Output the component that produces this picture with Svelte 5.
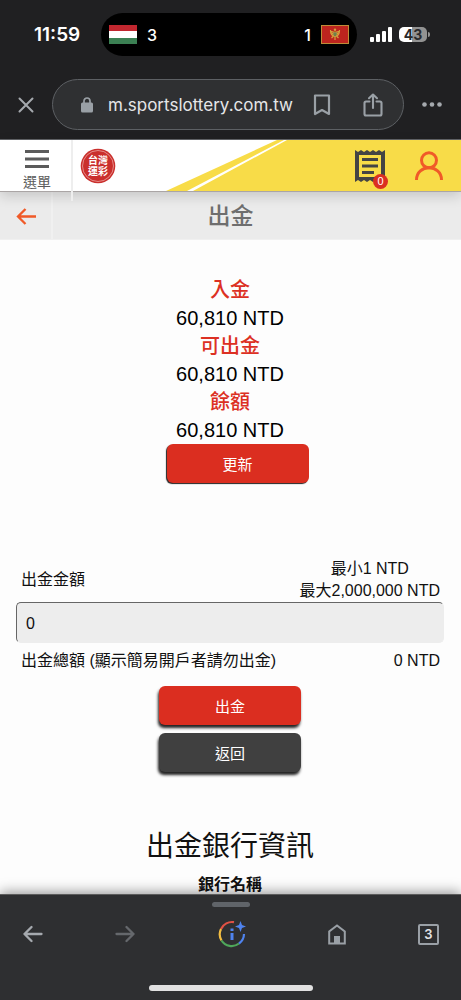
<script>
  const balances = [
    { label: '入金', value: '60,810 NTD' },
    { label: '可出金', value: '60,810 NTD' },
    { label: '餘額', value: '60,810 NTD' }
  ];
  let amount = $state('0');
</script>

<div class="phone">
  <div class="chrome">
    <div class="status">
      <span class="time">11:59</span>
      <div class="island">
        <svg width="28" height="19" viewBox="0 0 28 19" aria-hidden="true">
          <rect width="28" height="19" fill="#fff" />
          <rect width="28" height="6" fill="#c1272f" />
          <rect y="13" width="28" height="6" fill="#3b8053" />
        </svg>
        <span>3</span>
        <span class="away">1</span>
        <svg width="28" height="19" viewBox="0 0 28 19" aria-hidden="true">
          <rect x=".5" y=".5" width="27" height="18" fill="#bd241e" stroke="#bd8c38" />
          <g fill="none" stroke="#d3a13d" stroke-width="1.2">
            <path d="M12.5 7c-2-.2-2.8-1-3-2 0 4 1 6 4 6M15.5 7c2-.2 2.8-1 3-2 0 4-1 6-4 6" />
            <path d="M10 7.5l2 1.5M18 7.5l-2 1.5M12.5 11l-2 2M15.5 11l2 2M14 11v4" />
          </g>
          <circle cx="14" cy="4.8" r="1.2" fill="#d3a13d" />
          <path d="M12 7h4v3l-2 2-2-2z" fill="#71804b" stroke="#d3a13d" stroke-width=".7" />
        </svg>
      </div>
      <svg width="22" height="15" viewBox="0 0 22 15" fill="#fff" aria-hidden="true">
        <rect x="0" y="10" width="4" height="5" rx="1" />
        <rect x="6" y="7" width="4" height="8" rx="1" />
        <rect x="12" y="4" width="4" height="11" rx="1" />
        <rect x="18" y="0" width="4" height="15" rx="1" />
      </svg>
      <div class="battery"><span>43</span></div>
    </div>

    <div class="address">
      <button class="plain close" aria-label="Close">
        <svg width="16" height="16" viewBox="0 0 16 16"><path d="M1.5 1.5l13 13M14.5 1.5l-13 13" stroke="#a5a9ae" stroke-width="2" stroke-linecap="round" /></svg>
      </button>
      <div class="url">
        <svg width="12" height="16" viewBox="0 0 12 16" aria-hidden="true">
          <rect y="5.5" width="12" height="10" rx="1.5" fill="#9aa0a6" />
          <path d="M3 6V4a3 3 0 0 1 6 0v2" fill="none" stroke="#9aa0a6" stroke-width="1.7" />
        </svg>
        <span class="domain">m.sportslottery.com.tw</span>
        <button class="plain" aria-label="Bookmark">
          <svg width="18" height="22" viewBox="0 0 18 22"><path d="M2 1.5h14v18.5l-7-4-7 4z" fill="none" stroke="#9aa0a6" stroke-width="2.2" stroke-linejoin="round" /></svg>
        </button>
        <button class="plain share" aria-label="Share">
          <svg width="20" height="24" viewBox="0 0 20 24" fill="none" stroke="#9aa0a6" stroke-width="2.1" stroke-linecap="round" stroke-linejoin="round"><path d="M6.500 8.500H3a1.500 1.500 0 0 0-1.500 1.500v11A1.500 1.500 0 0 0 3 22.500h14a1.500 1.500 0 0 0 1.500-1.500V10A1.500 1.500 0 0 0 17 8.500h-3.500M10 15V1.500M6 5.200l4-3.700 4 3.700" /></svg>
        </button>
      </div>
      <button class="plain" aria-label="More">
        <svg width="20" height="5" viewBox="0 0 20 5" fill="#a5a9ae"><circle cx="2.500" cy="2.500" r="2.300" /><circle cx="10" cy="2.500" r="2.300" /><circle cx="17.500" cy="2.500" r="2.300" /></svg>
      </button>
    </div>
  </div>

  <header>
    <svg class="stripes" viewBox="0 0 461 51" preserveAspectRatio="none" aria-hidden="true">
      <path d="M166 51L277 0H461V51z" fill="#f8dc48" />
      <path d="M187 51L284 0H287L193 51z" fill="#fff" />
    </svg>
    <button class="plain menu">
      <svg width="24" height="18" viewBox="0 0 24 18" fill="#5b5b5b" aria-hidden="true"><path d="M0 0h24v3H0zM0 7.500h24v3H0zM0 15h24v3H0z" /></svg>
      選單
    </button>
    <svg class="logo" width="36" height="36" viewBox="0 0 36 36" role="img" aria-label="台灣運彩">
      <circle cx="18" cy="18" r="17.300" fill="#ca2f2c" />
      <circle cx="18" cy="18" r="15.500" fill="none" stroke="#eba29e" stroke-width=".8" />
      <g fill="#fff" font-size="10" font-weight="700" text-anchor="middle">
        <text x="18" y="16">台灣</text>
        <text x="18" y="27">運彩</text>
      </g>
    </svg>
    <button class="plain slip" aria-label="投注單">
      <svg width="30" height="32" viewBox="0 0 30 32">
        <path d="M0 0l3 2 3-2 3 2 3-2 3 2 3-2 3 2 3-2 3 2 3-2v32l-3-2-3 2-3-2-3 2-3-2-3 2-3-2-3 2-3-2-3 2z" fill="#444" />
        <path d="M4 5h22v22H4z" fill="#f8dc48" />
        <path d="M7 8h16v3H7zM7 14.500h16v3H7zM7 21h12v3H7z" fill="#444" />
      </svg>
      <span class="badge">0</span>
    </button>
    <button class="plain" aria-label="會員">
      <svg width="28" height="30" viewBox="0 0 28 30" fill="none" stroke="#f05a28" stroke-width="3"><circle cx="14" cy="9.300" r="7.500" /><path d="M1.500 29C1.500 12.800 26.500 12.800 26.500 29" /></svg>
    </button>
  </header>

  <div class="titlebar">
    <button class="plain back" aria-label="返回上一頁">
      <svg width="20" height="17" viewBox="0 0 20 17" fill="none" stroke="#f05a28" stroke-width="2.300"><path d="M20 8.500H2M9.500 1L2 8.500 9.500 16" /></svg>
    </button>
    <h1>出金</h1>
  </div>

  <main>
    <dl>
      {#each balances as b}
        <dt>{b.label}</dt>
        <dd>{b.value}</dd>
      {/each}
    </dl>
    <div class="refresh"><button class="btn">更新</button></div>

    <div class="row limits">
      <label for="amount">出金金額</label>
      <div class="range">最小1 NTD<br />最大2,000,000 NTD</div>
    </div>
    <input id="amount" type="text" inputmode="numeric" bind:value={amount} />
    <div class="row total">
      <span>出金總額 (顯示簡易開戶者請勿出金)</span>
      <span>0 NTD</span>
    </div>

    <div class="actions">
      <button class="btn raised">出金</button>
      <button class="btn raised dark">返回</button>
    </div>

    <h2>出金銀行資訊</h2>
    <h3>銀行名稱</h3>
  </main>

  <nav>
    <div class="grip"></div>
    <div class="tools">
      <button class="plain" aria-label="Back">
        <svg width="20" height="18" viewBox="0 0 20 18" fill="none" stroke="#a5a9ae" stroke-width="2.300" stroke-linecap="round" stroke-linejoin="round"><path d="M18.500 9H1.500M8.500 2l-7 7 7 7" /></svg>
      </button>
      <button class="plain" aria-label="Forward">
        <svg width="20" height="18" viewBox="0 0 20 18" fill="none" stroke="#65686c" stroke-width="2.300" stroke-linecap="round" stroke-linejoin="round"><path d="M1.500 9h17M11.500 2l7 7-7 7" /></svg>
      </button>
      <button class="plain lens" aria-label="Page info">
        <svg width="28" height="28" viewBox="0 0 28 28" fill="none" stroke-width="2.200">
          <path d="M3 9A12 12 0 0 1 16 2.200" stroke="#df5144" />
          <path d="M3 9A12 12 0 0 0 3.500 20.500" stroke="#f2bd42" />
          <path d="M3.500 20.500A12 12 0 0 0 21 23.500" stroke="#4fa65a" />
          <path d="M21 23.500A12 12 0 0 0 26 14" stroke="#4f83ee" />
          <path d="M12.500 8.500h3v2.500h-3zM12.500 13h3v7h-3z" fill="#4f83ee" />
          <path d="M22.500 1l1.500 4 4 1.500-4 1.500-1.500 4-1.500-4-4-1.500 4-1.500z" fill="#4f83ee" />
        </svg>
      </button>
      <button class="plain" aria-label="Home">
        <svg width="18" height="21" viewBox="0 0 18 21"><path d="M1.200 19.500V7.500L9 1.500l7.800 6v12z" fill="none" stroke="#9aa0a6" stroke-width="2" /><path d="M6 12h6v7.500H6z" fill="#9aa0a6" /></svg>
      </button>
      <button class="plain tabs" aria-label="Tabs">3</button>
    </div>
    <div class="home-bar"></div>
  </nav>
</div>

<style>
  :global(body) { margin: 0; background: #fdfdfd; }
  .phone {
    display: flex;
    flex-direction: column;
    height: 100vh;
    overflow: hidden;
    background: #fdfdfd;
    color: #111;
    font-family: "Liberation Sans", "Noto Sans CJK TC", sans-serif;
  }
  .phone * { box-sizing: border-box; }
  svg { display: block; flex: none; }
  button, input { font: inherit; }
  .plain {
    display: flex;
    align-items: center;
    justify-content: center;
    padding: 0;
    border: 0;
    background: none;
    color: inherit;
  }

  .chrome {
    flex: none;
    background: #202022;
    color: #fff;
    font-family: Inter, sans-serif;
    border-bottom: 1px solid #626468;
  }
  .status { display: flex; align-items: center; padding: 13px 34px 0 34px; }
  .time { width: 67px; font-size: 19px; font-weight: 600; }
  .island {
    display: flex;
    flex: 1;
    align-items: center;
    gap: 10px;
    height: 43px;
    margin-right: 13px;
    padding: 0 8px;
    border-radius: 22px;
    background: #000;
    font-size: 16px;
    font-weight: 500;
  }
  .away { margin-left: auto; }
  .battery {
    position: relative;
    width: 28px;
    height: 15px;
    margin-left: 7px;
    border-radius: 5px;
    background: linear-gradient(90deg, #fff 45%, #929292 45%);
    color: #29292b;
    font-size: 14px;
    font-weight: 700;
    line-height: 15px;
    text-align: center;
  }
  .battery::after {
    content: "";
    position: absolute;
    right: -3px;
    top: 5px;
    width: 2px;
    height: 5px;
    border-radius: 0 2px 2px 0;
    background: #929292;
  }
  .address { display: flex; align-items: center; gap: 18px; padding: 23px 19px 9px 18px; }
  .url {
    display: flex;
    flex: 1;
    align-items: center;
    height: 51px;
    padding: 0 20px 0 28px;
    border: 1px solid #5d6064;
    border-radius: 26px;
    background: #2f3032;
    color: #e5e6e8;
  }
  .domain { flex: 1; margin-left: 15px; font-size: 17px; }
  .share { margin-left: 32px; }

  header {
    position: relative;
    z-index: 2;
    display: flex;
    flex: none;
    align-items: center;
    height: 52px;
    padding-right: 18px;
    border-bottom: 1px solid #aaa5a5;
    background: #fff;
    box-shadow: 0 4px 12px rgba(0, 0, 0, .16);
  }
  header > * { position: relative; }
  .stripes { position: absolute; inset: 0; width: 100%; height: 100%; }
  .menu {
    flex-direction: column;
    align-self: flex-start;
    gap: 3px;
    width: 73px;
    height: 61px;
    padding: 10px 0 0 3px;
    justify-content: flex-start;
    border-right: 2px solid #eee;
    color: #5b5b5b;
    font-size: 14px;
    line-height: 22px;
  }
  .logo { margin: 0 auto 0 7px; }
  .slip { margin-right: 30px; }
  .badge {
    position: absolute;
    right: -3px;
    bottom: -7px;
    width: 15px;
    height: 15px;
    border-radius: 50%;
    background: #db3022;
    color: #fff;
    font-size: 11px;
    line-height: 15px;
    text-align: center;
  }
  .titlebar {
    display: grid;
    flex: none;
    grid-template-columns: 53px 1fr 53px;
    height: 48px;
    background: #ebebeb;
    border-bottom: 1px solid #f0f0f0;
  }
  .back { border-right: 2px solid #f0f0f0; }
  h1, h2, h3, dl, dd { margin: 0; }
  h1 { color: #6e6e6e; font-size: 23px; font-weight: 500; line-height: 48px; text-align: center; }

  main { flex: 1; min-height: 0; overflow: hidden; padding: 36px 17px 0 16px; text-align: center; }
  dl { font-size: 20px; line-height: 28px; color: #000; }
  dt { color: #dc3023; font-weight: 500; }
  .btn {
    display: block;
    width: 142px;
    height: 39px;
    padding: 0;
    border: 0;
    border-radius: 6px;
    background: #db2e20;
    color: #fff;
    font-size: 15px;
    box-shadow: -1px 1px 1px #222;
  }
  .refresh { display: grid; justify-content: center; padding-left: 15px; }
  .row { display: flex; align-items: center; justify-content: space-between; padding: 0 4px 0 5px; font-size: 16px; line-height: 22px; }
  .limits { margin-top: 75px; }
  input {
    display: block;
    width: 100%;
    height: 41px;
    padding: 3px 9px 0;
    border: 1px solid #666;
    border-right-color: #ededed;
    border-bottom-color: #ededed;
    border-radius: 5px;
    background: #ededed;
    color: #111;
    font-size: 16px;
  }
  .total { margin-top: 7px; }
  .actions { display: grid; justify-content: center; gap: 8px; margin-top: 14px; }
  .raised { box-shadow: -1px 3px 3px #222; }
  .dark { background: #404040; }
  h2 { margin-top: 55px; font-size: 28px; font-weight: 400; line-height: 40px; }
  h3 { margin-top: 6px; font-size: 16px; font-weight: 600; line-height: 24px; }

  nav {
    position: relative;
    z-index: 2;
    display: flex;
    flex: none;
    flex-direction: column;
    align-items: center;
    height: 106px;
    padding: 7px 0 9px;
    border-top: 1px solid #5c5c5c;
    background: #2e2f31;
    box-shadow: 0 -2px 12px rgba(0, 0, 0, .4);
  }
  .grip { width: 38px; height: 5px; border-radius: 3px; background: #606469; }
  .tools { display: flex; align-items: center; justify-content: space-between; width: 100%; padding: 13px 22px 0 23px; }
  .lens { width: 48px; }
  .tabs {
    width: 21px;
    height: 21px;
    border: 2px solid #9aa0a6;
    border-radius: 2px;
    color: #e3e5e7;
    font-family: Inter, sans-serif;
    font-size: 13px;
    font-weight: 600;
  }
  .home-bar { width: 164px; height: 6px; margin-top: auto; border-radius: 3px; background: #e1e1e1; }
</style>
